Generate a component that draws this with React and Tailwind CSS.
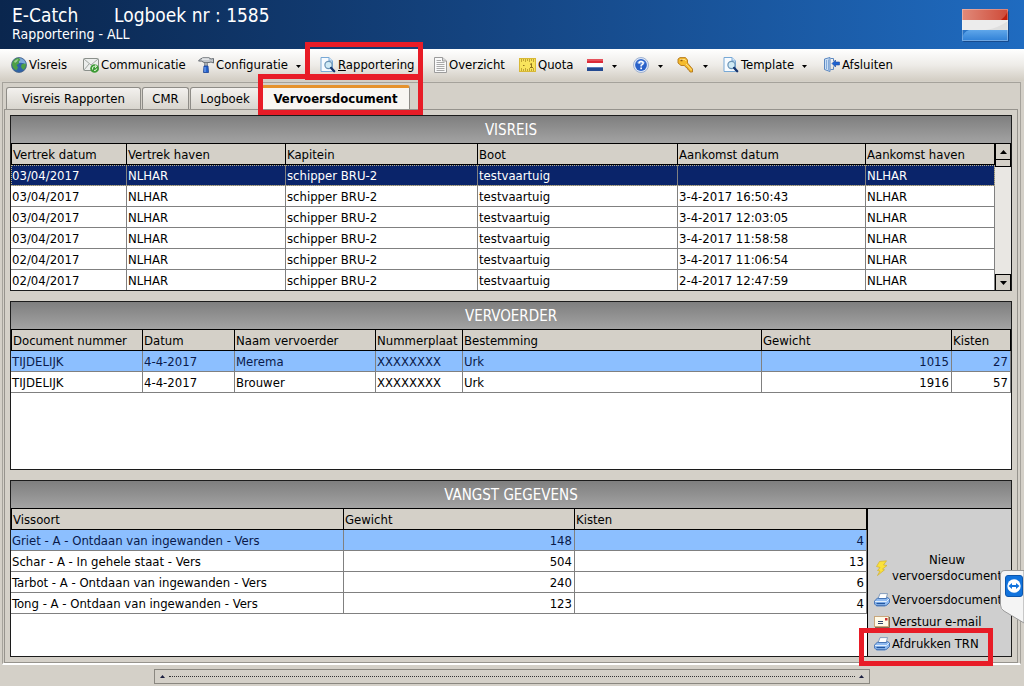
// App.jsx
import { useState } from 'react';

const voyages = [
    ['03/04/2017', 'NLHAR', 'schipper BRU-2', 'testvaartuig', '', 'NLHAR'],
    ['03/04/2017', 'NLHAR', 'schipper BRU-2', 'testvaartuig', '3-4-2017 16:50:43', 'NLHAR'],
    ['03/04/2017', 'NLHAR', 'schipper BRU-2', 'testvaartuig', '3-4-2017 12:03:05', 'NLHAR'],
    ['03/04/2017', 'NLHAR', 'schipper BRU-2', 'testvaartuig', '3-4-2017 11:58:58', 'NLHAR'],
    ['02/04/2017', 'NLHAR', 'schipper BRU-2', 'testvaartuig', '3-4-2017 11:06:54', 'NLHAR'],
    ['02/04/2017', 'NLHAR', 'schipper BRU-2', 'testvaartuig', '2-4-2017 12:47:59', 'NLHAR'],
];

const carriers = [
    ['TIJDELIJK', '4-4-2017', 'Merema', 'XXXXXXXX', 'Urk', '1015', '27'],
    ['TIJDELIJK', '4-4-2017', 'Brouwer', 'XXXXXXXX', 'Urk', '1916', '57'],
];

const catches = [
    ['Griet - A - Ontdaan van ingewanden - Vers', '148', '4'],
    ['Schar - A - In gehele staat - Vers', '504', '13'],
    ['Tarbot - A - Ontdaan van ingewanden - Vers', '240', '6'],
    ['Tong - A - Ontdaan van ingewanden - Vers', '123', '4'],
];

const voyageColumns = [
    { label: 'Vertrek datum', width: 'w-[116px]' },
    { label: 'Vertrek haven', width: 'w-[159px]' },
    { label: 'Kapitein', width: 'w-[192px]' },
    { label: 'Boot', width: '' },
    { label: 'Aankomst datum', width: 'w-[188px]' },
    { label: 'Aankomst haven', width: 'w-[129px]' },
];

const carrierColumns = [
    { label: 'Document nummer', width: 'w-[132px]' },
    { label: 'Datum', width: 'w-[92px]' },
    { label: 'Naam vervoerder', width: 'w-[141px]' },
    { label: 'Nummerplaat', width: 'w-[87px]' },
    { label: 'Bestemming', width: '' },
    { label: 'Gewicht', width: 'w-[190px]', numeric: true },
    { label: 'Kisten', width: 'w-[59px]', numeric: true },
];

const catchColumns = [
    { label: 'Vissoort', width: 'w-[333px]' },
    { label: 'Gewicht', width: 'w-[231px]', numeric: true },
    { label: 'Kisten', width: '', numeric: true },
];

/* Icons */
const Globe = () => (
    <svg width="16" height="16" viewBox="0 0 16 16" className="shrink-0">
        <circle cx="8" cy="8" r="7.5" fill="#2f62a8" stroke="#4a6384" strokeWidth="0.8" />
        <path d="M8 1 A7 7 0 0 1 15 8 Q12 5 8 6Z" fill="#7fa9dc" />
        <path d="M1.500 5 Q4 .8 8 1 L9.500 3 L7.500 4.500 L8 6.500 L5.500 8 L7 10.500 L5.500 13.500 Q1 11 1 7Z" fill="#4ea045" />
        <path d="M11 7 L14.800 6.500 Q15.500 10 12.500 13 L10.500 11 L10 9Z" fill="#4ea045" />
        <path d="M3 4.500 Q5 2 7.500 2 L6 4.500 L4 6Z" fill="#b4dba6" opacity=".8" />
    </svg>
);

const MailSync = () => (
    <svg width="16" height="16" viewBox="0 0 16 16" className="shrink-0">
        <rect x=".5" y="1.500" width="15" height="12" rx="1" fill="#eceeec" stroke="#8b908b" />
        <path d="M1 2 L8 8 L15 2 M1 13 L6 7" fill="none" stroke="#a2a7a2" />
        <circle cx="11.500" cy="11.500" r="4.300" fill="#3d9b35" />
        <path d="M9.500 12.500 Q8.800 9.500 11.500 9.300 H13 M12 7.800 L13.800 9.300 L12 10.800 M13.800 11.500 Q13.500 13.800 11 13.500" fill="none" stroke="#e3f6dc" />
    </svg>
);

const Hammer = () => (
    <svg width="16" height="16" viewBox="0 0 16 16" className="shrink-0">
        <path d="M.5 4 Q2 1.500 5 .8 H11 L13 2 L15.500 1.500 V6 L13 5 L11 5.500 H6 Q4 3.500 .5 4Z" fill="#c4c8cc" stroke="#5b6168" strokeWidth=".9" />
        <path d="M4 2 H11" stroke="#fff" />
        <rect x="6.500" y="5.500" width="3" height="4" fill="#a5abb2" stroke="#6b7076" strokeWidth=".6" />
        <path d="M6 9 H10 L10.500 15.500 H5.500Z" fill="#2563cf" stroke="#173f93" strokeWidth=".8" />
        <path d="M7 10 V15" stroke="#85b1f5" />
    </svg>
);

const PageSearch = () => (
    <svg width="16" height="16" viewBox="0 0 16 16" className="shrink-0">
        <path d="M1 .5 H9 L12.500 4 V14.500 H1Z" fill="#f7fbff" stroke="#78a9d6" />
        <path d="M9 .5 V4 H12.500" fill="#d2e6f8" stroke="#78a9d6" />
        <circle cx="8.500" cy="8" r="3.600" fill="#cfeaf5" stroke="#6a93b5" strokeWidth="1.200" />
        <path d="M11.200 11 L14.200 14.200" stroke="#16356e" strokeWidth="2.400" strokeLinecap="round" />
    </svg>
);

const PageLines = () => (
    <svg width="13" height="16" viewBox="0 0 13 16" className="shrink-0">
        <path d="M.5 .5 H8.500 L12.500 4 V15.500 H.5Z" fill="#fafafa" stroke="#9c9c9c" />
        <path d="M8.500 .5 V4 H12.500" fill="#ddd" stroke="#9c9c9c" />
        <path d="M2.500 3.500 H7 M2.500 5.500 H10.500 M2.500 7.500 H10.500 M2.500 9.500 H10.500 M2.500 11.500 H10.500 M2.500 13.500 H10.500" stroke="#a9a9a9" />
    </svg>
);

const Ruler = () => (
    <svg width="17" height="16" viewBox="0 0 17 16" className="shrink-0">
        <rect x=".5" y="1.500" width="16" height="13" fill="#f8e45c" stroke="#d9b935" />
        <path d="M2.500 2 V5 M4.500 2 V4 M6.500 2 V5 M8.500 2 V4 M10.500 2 V5 M12.500 2 V4 M14.500 2 V5 M2.500 14 V11 M4.500 14 V12 M6.500 14 V11 M8.500 14 V12 M10.500 14 V11 M12.500 14 V12 M14.500 14 V11" stroke="#b3942a" strokeWidth=".8" />
        <path d="M4 8.500 H5.500 M12.500 10.500 V6.500 L11 7.500 M11 10.500 H14" fill="none" stroke="#8f741c" />
    </svg>
);

const SmallFlag = () => (
    <svg width="16" height="12" viewBox="0 0 16 12" className="shrink-0">
        <rect width="16" height="12" fill="#fff" />
        <rect width="16" height="4" fill="#dc2b38" />
        <rect y="8" width="16" height="4" fill="#244a91" />
        <path d="M0 1 H16" stroke="#ef7a80" />
        <path d="M0 8.500 H16" stroke="#5c7eba" />
    </svg>
);

const Help = () => (
    <svg width="16" height="16" viewBox="0 0 16 16" className="shrink-0">
        <circle cx="8" cy="8" r="7.500" fill="#dfe8f7" stroke="#8da3c8" strokeWidth=".8" />
        <circle cx="8" cy="8" r="5.900" fill="#2a62c9" />
        <path d="M3.500 6 A5 5 0 0 1 12.500 6 Q8 8 3.500 6Z" fill="#86aeee" opacity=".7" />
        <path d="M6 6.500 Q6 4.500 8 4.500 Q10.200 4.500 10.200 6.300 Q10.200 7.500 8.200 8.300 V9.500" fill="none" stroke="#fff" strokeWidth="1.500" />
        <rect x="7.300" y="10.500" width="1.700" height="1.700" fill="#fff" />
    </svg>
);

const Key = () => (
    <svg width="17" height="16" viewBox="0 0 17 16" className="shrink-0">
        <path d="M1 2 L3 .6 H8.500 L10.500 3 V6 L15.500 12 V15 H13 L12 13 L10.800 12.500 L10.500 11 L9 10.500 L7.500 8.500 H4 L1 6Z" fill="#f5bb2c" stroke="#b3761a" strokeWidth=".9" />
        <path d="M3 2.500 H8 L9 4 M9 7 L14.500 13" fill="none" stroke="#fde089" />
        <path d="M3.500 3.500 H5.500" stroke="#8f5a10" strokeWidth="1.500" />
    </svg>
);

const Exit = () => (
    <svg width="16" height="16" viewBox="0 0 16 16" className="shrink-0">
        <path d="M.5 2 L6 .5 V14.500 L.5 12.500Z" fill="#c9def5" stroke="#5c88c0" />
        <path d="M2.500 3 V12 M4.500 2.500 V13" stroke="#85abd9" />
        <path d="M6.500 1.500 H9.500 V4 M6.500 12.500 H9.500 V9.500" fill="none" stroke="#5c88c0" />
        <path d="M8 6.500 L11.500 3 V5 H15.500 V8 H11.500 V10Z" fill="#1e62d0" stroke="#1b4ca0" strokeWidth=".6" />
    </svg>
);

const Lightning = () => (
    <svg width="16" height="16" viewBox="0 0 16 16" className="shrink-0">
        <path d="M5.500 1.500 L12.500 .8 L9.500 5 L13 5.500 L8.500 9 L10.500 9.800 L3.500 15.500 L6 11 L3.500 10.500 L6 7.500 L2.500 6.500Z" fill="#fbe23a" stroke="#d3b02c" strokeWidth=".7" />
    </svg>
);

const Printer = () => (
    <svg width="16" height="14" viewBox="0 0 16 14" className="shrink-0">
        <path d="M4 6 L6 .6 H13.500 L12 6Z" fill="#fff" stroke="#7b95b8" strokeWidth=".9" />
        <path d="M.6 8 L3.500 5 L5 5.500 H12 L13.500 4.500 L15.500 6 V9.500 L12.500 12.500 H2 L.6 11Z" fill="#8fbaf0" stroke="#3b6cb0" strokeWidth=".9" />
        <path d="M1 8.500 H12.500 L15 6" fill="none" stroke="#e3effc" />
        <path d="M2.500 10.500 H11" stroke="#2457a0" strokeWidth="1.300" />
        <path d="M2.500 13.300 H11 L13.500 11" fill="none" stroke="#6e94c6" strokeWidth=".8" />
    </svg>
);

const Envelope = () => (
    <svg width="16" height="12" viewBox="0 0 16 12" className="shrink-0">
        <rect x=".5" y=".5" width="14" height="10" fill="#fffbe9" stroke="#c9a77c" />
        <path d="M15.500 1 V11.500 H1" fill="none" stroke="#7c6a52" />
        <path d="M4 5.500 H9 M4 7.500 H9" stroke="#33466b" />
        <rect x="11" y="2" width="2.500" height="2.500" fill="#c92f2f" />
    </svg>
);

const Caret = () => (
    <svg width="5" height="3" viewBox="0 0 5 3" className="shrink-0">
        <path d="M0 0 H5 L2.500 3Z" fill="#000" />
    </svg>
);

const Triangle = ({ down }) => (
    <svg width="7" height="4" viewBox="0 0 7 4" className="shrink-0">
        <path d={down ? 'M0 0 H7 L3.500 4Z' : 'M0 4 H7 L3.500 0Z'} fill="currentColor" />
    </svg>
);

const SmallTriangle = () => (
    <svg width="5" height="3" viewBox="0 0 5 3" className="shrink-0">
        <path d="M0 3 H5 L2.500 0Z" fill="currentColor" />
    </svg>
);

const HeaderFlag = () => (
    <svg width="48" height="34" viewBox="0 0 48 34" className="shrink-0">
        <defs>
            <linearGradient id="flagRed" x1="0" x2="1">
                <stop offset="0" stopColor="#e08a7a" />
                <stop offset="1" stopColor="#cf4a38" />
            </linearGradient>
            <linearGradient id="flagBlue" x1="0" x2="0" y1="0" y2="1">
                <stop offset="0" stopColor="#5fa6ea" />
                <stop offset="1" stopColor="#2f80d6" />
            </linearGradient>
        </defs>
        <rect x="1" y="2" width="46" height="31" rx="1" fill="#123f7c" opacity=".7" />
        <rect width="46" height="32" fill="#ececec" />
        <rect width="46" height="11" fill="url(#flagRed)" />
        <rect y="21" width="46" height="11" fill="url(#flagBlue)" />
        <path d="M46 2 V11 H39 Q44 7 46 2Z" fill="#c21f0c" />
        <path d="M0 32 V30 Q1 23 7 21 H0Z" fill="#2a74c6" />
        <path d="M24 21 Q36 19 46 12 V21Z" fill="#dfdfdf" />
        <rect x=".5" y=".5" width="45" height="31" fill="none" stroke="#fff" strokeOpacity=".3" />
    </svg>
);

const RemoteLogo = () => (
    <svg width="18" height="22" viewBox="0 0 18 22">
        <rect x=".5" y=".5" width="17" height="21" rx="2.500" fill="#1173dd" stroke="#0c55ab" />
        <circle cx="9" cy="11" r="6.700" fill="#fff" />
        <path d="M3.500 11 L7 8 V10 H11 V8 L14.500 11 L11 14 V12 H7 V14Z" fill="#1173dd" />
    </svg>
);

const toolbar = [
    { label: 'Visreis', icon: Globe, width: 'w-[72px]' },
    { label: 'Communicatie', icon: MailSync, width: 'w-[115px]' },
    { label: 'Configuratie', icon: Hammer, width: 'w-[122px]', menu: true },
    { label: 'Rapportering', icon: PageSearch, width: 'w-[114px]', underline: true, marked: true },
    { label: 'Overzicht', icon: PageLines, width: 'w-[85px]' },
    { label: 'Quota', icon: Ruler, width: 'w-[68px]' },
    { name: 'Taal', icon: SmallFlag, width: 'w-[46px]', menu: true },
    { name: 'Help', icon: Help, width: 'w-[44px]', menu: true },
    { name: 'Sleutel', icon: Key, width: 'w-[46px]', menu: true },
    { label: 'Template', icon: PageSearch, width: 'w-[101px]', menu: true },
    { label: 'Afsluiten', icon: Exit, width: 'w-[80px]' },
];

const tabs = [
    { label: 'Visreis Rapporten', width: 'w-[135px]' },
    { label: 'CMR', width: 'w-[47px]' },
    { label: 'Logboek', width: 'w-[70px]' },
    { label: 'Vervoersdocument', width: 'w-[149px]' },
];

const ToolButton = ({ label, name, icon: Icon, width, menu, underline, marked }) => (
    <button type="button" aria-label={label || name} className={`relative flex h-8 shrink-0 items-center whitespace-nowrap ${width}`}>
        <Icon />
        {label && (
            <span className="ml-0.5">
                {underline ? <><u>{label[0]}</u>{label.slice(1)}</> : label}
            </span>
        )}
        {menu && <span className={label ? 'ml-2 pt-0.5' : 'ml-[9px] pt-0.5'}><Caret /></span>}
        {marked && <span className="pointer-events-none absolute -top-[7px] -left-[15px] z-10 h-[38px] w-[118px] border-[5px] border-[#e81c27]" />}
    </button>
);

const Grid = ({ columns, rows, dark, flush }) => {
    const [selected, setSelected] = useState(0);

    return (
        <table className="w-full table-fixed border-separate border-spacing-0">
            <thead>
                <tr>
                    {columns.map((c) => (
                        <th key={c.label} className={`h-[21px] overflow-hidden border-r border-b border-black bg-[#d4d0c8] px-px pt-px pb-0 text-left font-normal whitespace-nowrap first:border-l ${c.width}`}>
                            {c.label}
                        </th>
                    ))}
                </tr>
            </thead>
            <tbody className={flush ? '[&>tr:last-child>td]:h-5 [&>tr:last-child>td]:border-b-0' : ''}>
                {rows.map((row, r) => {
                    const active = r === selected;
                    const color = active ? (dark ? 'bg-[#0a246a] text-white outline-1 -outline-offset-1 outline-dotted outline-[#b9b08a]' : 'bg-[#8cbfff] text-[#0a1a4a]') : 'bg-white';
                    return (
                        <tr key={r} onClick={() => setSelected(r)} className={color}>
                            {row.map((cell, i) => (
                                <td key={i} className={`h-[21px] overflow-hidden border-r border-b border-[#808080] pt-px pb-0 whitespace-nowrap ${columns[i].numeric ? 'pr-0.5 text-right' : 'px-px'}`}>
                                    {cell}
                                </td>
                            ))}
                        </tr>
                    );
                })}
            </tbody>
        </table>
    );
};

const Panel = ({ title, children }) => (
    <section className="border border-[#1c1c1c] bg-white">
        <h2 className="flex h-7 items-center justify-center border-b border-black bg-linear-to-b from-[#7f7f7f] to-[#a3a3a3] text-[15px] text-white">
            {title}
        </h2>
        {children}
    </section>
);

const ScrollBar = () => (
    <div className="flex w-4 shrink-0 flex-col bg-[#e9e7e3]">
        <button type="button" aria-label="Omhoog" className="flex h-4 items-center justify-center border border-t-0 border-black bg-[#d4d0c8]">
            <Triangle />
        </button>
        <div className="h-[7px] border border-t-0 border-black bg-[#d4d0c8]" />
        <div className="flex-1" />
        <button type="button" aria-label="Omlaag" className="flex h-4 items-center justify-center border border-b-0 border-black bg-[#d4d0c8]">
            <Triangle down />
        </button>
    </div>
);

const App = () => {
    const [tab, setTab] = useState('Vervoersdocument');

    return (
        <div className="relative min-h-screen overflow-hidden bg-[#d4d0c8] font-['DejaVu_Sans_Condensed','DejaVu_Sans',sans-serif] text-[13px] leading-4 text-black">

            {/* Header */}
            <header className="flex h-[49px] items-start justify-between bg-linear-to-r from-[#0a264e] via-[#154684] to-[#1f6bc0] pt-1 pr-[14px] pl-3 text-white">
                <div>
                    <h1 className="flex text-[19px] leading-[22px]">
                        <span className="w-[102px]">E-Catch</span>
                        <span>Logboek nr : 1585</span>
                    </h1>
                    <p className="text-[14px] leading-4">Rapportering - ALL</p>
                </div>
                <div className="pt-[5px]"><HeaderFlag /></div>
            </header>

            {/* Toolbar */}
            <nav className="flex h-8 bg-linear-to-b from-white via-[#eeece8] to-[#d2cdc3] pl-[11px]">
                {toolbar.map((item) => (
                    <ToolButton key={item.label || item.name} {...item} />
                ))}
            </nav>

            {/* Tab control */}
            <div className="mt-px mr-[3px] ml-0.5 border-t border-r border-l border-[#a5a29b] border-b-2 border-b-white pr-0.5 pl-px">
                <div role="tablist" className="flex items-end gap-px pt-0.5 pl-0.5">
                    {tabs.map((t) => (
                        <button
                            key={t.label}
                            type="button"
                            role="tab"
                            aria-selected={t.label === tab}
                            onClick={() => setTab(t.label)}
                            className={`relative flex shrink-0 items-center justify-center rounded-t-[3px] border border-b-0 border-[#8e8c87] whitespace-nowrap ${t.width} ${t.label === tab
                                ? 'h-6 border-t-[3px] border-t-[#e5922d] bg-[#f8f6f2] font-bold'
                                : 'h-[22px] bg-linear-to-b from-[#f3f1ee] to-[#d8d5ce]'
                            }`}
                        >
                            {t.label}
                            {t.label === 'Vervoersdocument' && <span className="pointer-events-none absolute -top-[14px] -left-1 z-10 h-[41px] w-[165px] border-[5px] border-[#e81c27]" />}
                        </button>
                    ))}
                </div>

                <main className="flex flex-col gap-2.5 border border-[#96938d] p-[5px]">
                    <Panel title="VISREIS">
                        <div className="flex">
                            <Grid columns={voyageColumns} rows={voyages} dark flush />
                            <ScrollBar />
                        </div>
                    </Panel>

                    <Panel title="VERVOERDER">
                        <div className="min-h-[139px]">
                            <Grid columns={carrierColumns} rows={carriers} />
                        </div>
                    </Panel>

                    <Panel title="VANGST GEGEVENS">
                        <div className="flex min-h-[147px]">
                            <div className="flex-1">
                                <Grid columns={catchColumns} rows={catches} />
                            </div>
                            <div className="flex w-36 shrink-0 flex-col items-start justify-end gap-1.5 border-l border-black bg-[#cfcfcf] pb-1 pl-1.5 whitespace-nowrap">
                                <button type="button" className="flex items-center gap-0.5 pb-0.5">
                                    <Lightning />
                                    <span>Nieuw<br />vervoersdocument</span>
                                </button>
                                <button type="button" className="flex items-center gap-0.5">
                                    <Printer />
                                    Vervoersdocument
                                </button>
                                <button type="button" className="flex items-center gap-0.5">
                                    <Envelope />
                                    Verstuur e-mail
                                </button>
                                <button type="button" className="relative flex items-center gap-0.5">
                                    <Printer />
                                    Afdrukken TRN
                                    <span className="pointer-events-none absolute -top-2 -left-[15px] z-10 h-[38px] w-[134px] border-[5px] border-[#e81c27]" />
                                </button>
                            </div>
                        </div>
                    </Panel>
                </main>
            </div>

            {/* Splitter */}
            <button type="button" aria-label="Paneel openen" className="mx-auto mt-1 flex h-[15px] w-[70%] items-center gap-1 border border-[#8a8780] px-[5px] text-[#1b1f3f]">
                <SmallTriangle />
                <span className="flex-1 border-t border-dotted border-[#333]" />
                <SmallTriangle />
            </button>

            {/* Remote support tab */}
            <div className="absolute top-[570px] right-0 z-20">
                <svg width="24" height="54" viewBox="0 0 24 54">
                    <path d="M24 .5 H5 Q.5 .5 .5 5 V35 Q.5 39 4 41 L24 53Z" fill="#f4f4f4" stroke="#9a9a9a" />
                </svg>
                <div className="absolute top-[5px] left-[5px]"><RemoteLogo /></div>
            </div>
        </div>
    );
};

export default App;
